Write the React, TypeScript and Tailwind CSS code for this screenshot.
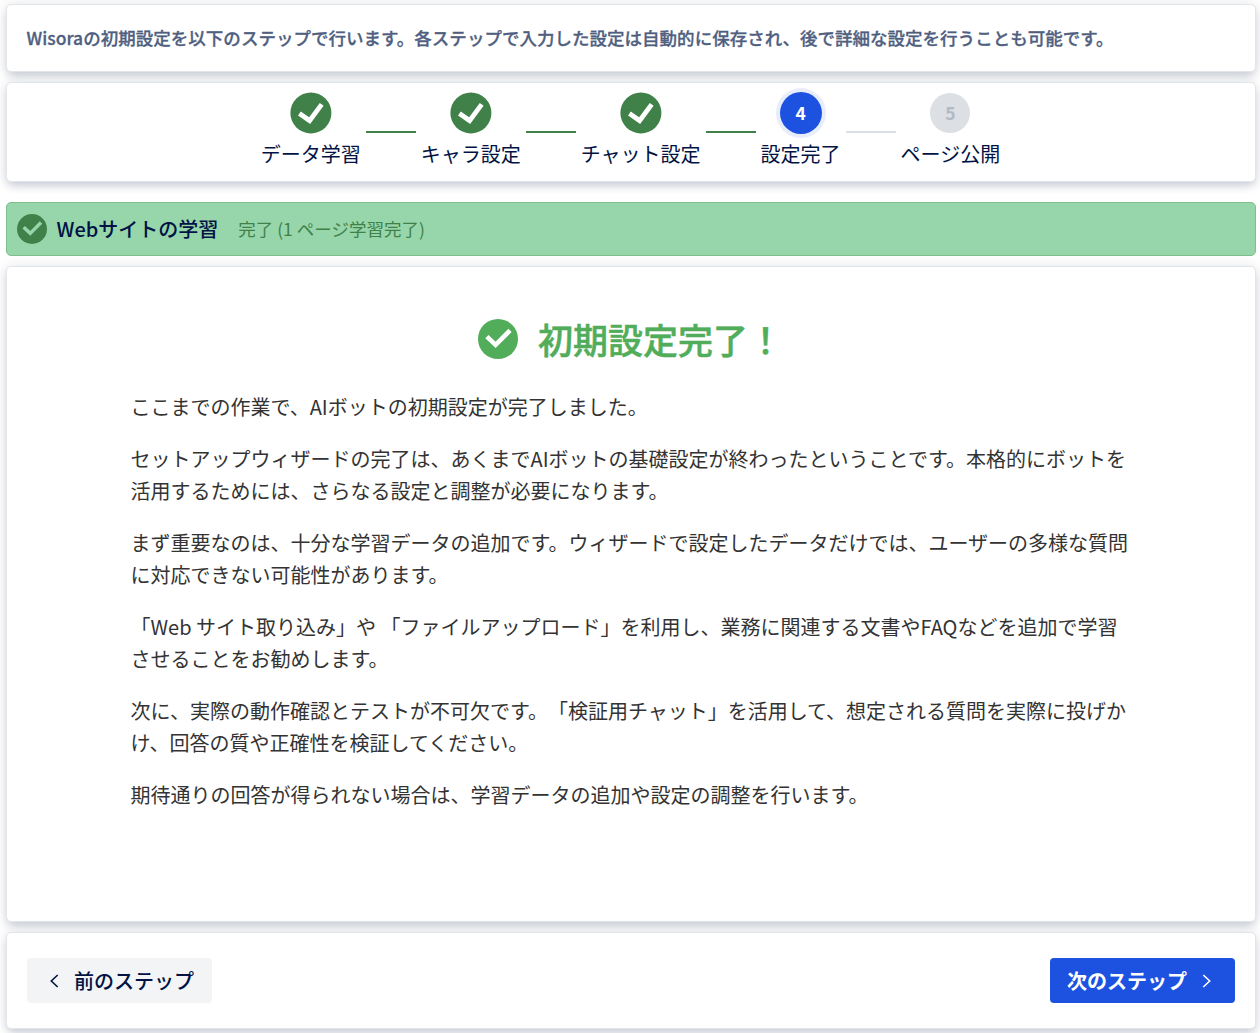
import { clsx } from "clsx";

type StepStatus = "done" | "active" | "pending";

type Step = {
  label: string;
  status: StepStatus;
};

const steps: Step[] = [
  { label: "データ学習", status: "done" },
  { label: "キャラ設定", status: "done" },
  { label: "チャット設定", status: "done" },
  { label: "設定完了", status: "active" },
  { label: "ページ公開", status: "pending" },
];

const paragraphs = [
  "ここまでの作業で、AIボットの初期設定が完了しました。",
  "セットアップウィザードの完了は、あくまでAIボットの基礎設定が終わったということです。本格的にボットを活用するためには、さらなる設定と調整が必要になります。",
  "まず重要なのは、十分な学習データの追加です。ウィザードで設定したデータだけでは、ユーザーの多様な質問に対応できない可能性があります。",
  "「Web サイト取り込み」や 「ファイルアップロード」を利用し、業務に関連する文書やFAQなどを追加で学習させることをお勧めします。",
  "次に、実際の動作確認とテストが不可欠です。「検証用チャット」を活用して、想定される質問を実際に投げかけ、回答の質や正確性を検証してください。",
  "期待通りの回答が得られない場合は、学習データの追加や設定の調整を行います。",
];

const cardClass =
  "rounded-[5px] border border-[#e2e5ea] bg-white shadow-[0_5px_10px_-2px_rgba(9,30,66,0.2),0_0_14px_rgba(9,30,66,0.1)]";

function StepIcon({ status, index }: { status: StepStatus; index: number }) {
  if (status === "done") {
    return (
      <svg viewBox="0 0 42 42" className="size-[42px]">
        <circle cx="20.9" cy="20.9" r="20.5" fill="#408149" />
        <path
          d="M9.4 21.6 L19.6 28.6 L31.7 12.4"
          fill="none"
          stroke="#fff"
          strokeWidth="4.8"
        />
      </svg>
    );
  }

  return (
    <span
      className={clsx(
        "flex items-center justify-center rounded-full text-[17.5px] font-bold",
        status === "active"
          ? "size-[42px] bg-[#1d52e1] text-white ring-4 ring-[#e8edfc]"
          : "size-10 bg-[#dcdfe4] text-[#b3b9c4]",
      )}
    >
      {index + 1}
    </span>
  );
}

function Stepper() {
  return (
    <ol className="flex justify-center">
      {steps.map((step, i) => (
        <li key={step.label} className="flex">
          {i > 0 ? (
            <span
              className={clsx(
                "mx-[5px] mt-[48px] h-[2px] w-[50px]",
                step.status === "pending" ? "bg-[#dcdfe4]" : "bg-[#408149]",
              )}
            />
          ) : null}
          <div className="-ml-[0.5px] flex flex-col items-center pr-[0.5px]">
            <span className="mt-[9px] flex h-[42px] items-center">
              <StepIcon status={step.status} index={i} />
            </span>
            <span className="mt-[5px] whitespace-nowrap leading-[30px]">
              {step.label}
            </span>
          </div>
        </li>
      ))}
    </ol>
  );
}

function CheckCircle({
  className,
  check = "#fff",
}: {
  className: string;
  check?: string;
}) {
  return (
    <svg viewBox="0 0 40 40" className={className}>
      <circle cx="20" cy="20" r="20" fill="currentColor" />
      <path
        d="M8.9 17.6 L17.6 25.8 L32 11.4"
        fill="none"
        stroke={check}
        strokeWidth="4.6"
      />
    </svg>
  );
}

export default function App() {
  return (
    <div
      lang="ja"
      className="flex h-[1033px] w-[1260px] flex-col overflow-hidden bg-white pt-1 pr-1 pl-1.5 font-['Noto_Sans_CJK_JP',sans-serif] text-xl text-[#001344] [text-spacing-trim:space-all]"
    >
      <header
        className={clsx(
          cardClass,
          "flex h-[68px] shrink-0 items-center px-[19.5px] text-[17.5px] font-medium tracking-[0.02px] text-[#505f80] [-webkit-text-stroke:0.3px]",
        )}
      >
        Wisoraの初期設定を以下のステップで行います。各ステップで入力した設定は自動的に保存され、後で詳細な設定を行うことも可能です。
      </header>

      <nav className={clsx(cardClass, "mt-2.5 h-[100px] shrink-0")}>
        <Stepper />
      </nav>

      <div className="relative mt-5 flex h-[54px] shrink-0 items-center rounded-[5px] border border-[#7dbf8d] bg-[#97d6aa] pl-2.5">
        <CheckCircle className="size-[30px] text-[#408149]" check="#97d6aa" />
        <span className="ml-[9.5px] font-medium">Webサイトの学習</span>
        <span className="ml-5 text-[17.5px] text-[#408149]">
          完了 (1 ページ学習完了)
        </span>
      </div>

      <main
        className={clsx(
          cardClass,
          "mt-2.5 h-[656px] shrink-0 pr-[124.5px] pl-[123.5px]",
        )}
      >
        <h1 className="mt-[46px] flex h-[52px] items-center justify-center gap-5 text-[35px] font-medium text-[#52ad5b] [-webkit-text-stroke:0.5px]">
          <CheckCircle className="size-10" />
          <span className="pb-0.5">初期設定完了！</span>
        </h1>
        <div className="mt-[26px] flex flex-col gap-5 leading-8 text-[#333]">
          {paragraphs.map((text) => (
            <p key={text}>{text}</p>
          ))}
        </div>
      </main>

      <footer
        className={clsx(
          cardClass,
          "mt-2.5 flex h-[97px] shrink-0 items-center justify-between px-5",
        )}
      >
        <button className="flex h-[45px] w-[185px] items-center rounded-[4px] bg-[#f3f4f6] pl-[22px] font-medium">
          <svg viewBox="0 0 10 14" className="mr-[15px] h-3.5 w-2.5">
            <path
              d="M8.7 1 L2.3 7 L8.7 13"
              fill="none"
              stroke="currentColor"
              strokeWidth="1.6"
            />
          </svg>
          前のステップ
        </button>
        <button className="flex h-[45px] w-[185px] items-center rounded-[4px] bg-[#1d52e1] pl-[17px] font-bold text-white">
          次のステップ
          <svg viewBox="0 0 10 14" className="ml-[15px] h-3.5 w-2.5">
            <path
              d="M1.3 1 L7.7 7 L1.3 13"
              fill="none"
              stroke="currentColor"
              strokeWidth="1.6"
            />
          </svg>
        </button>
      </footer>
    </div>
  );
}
